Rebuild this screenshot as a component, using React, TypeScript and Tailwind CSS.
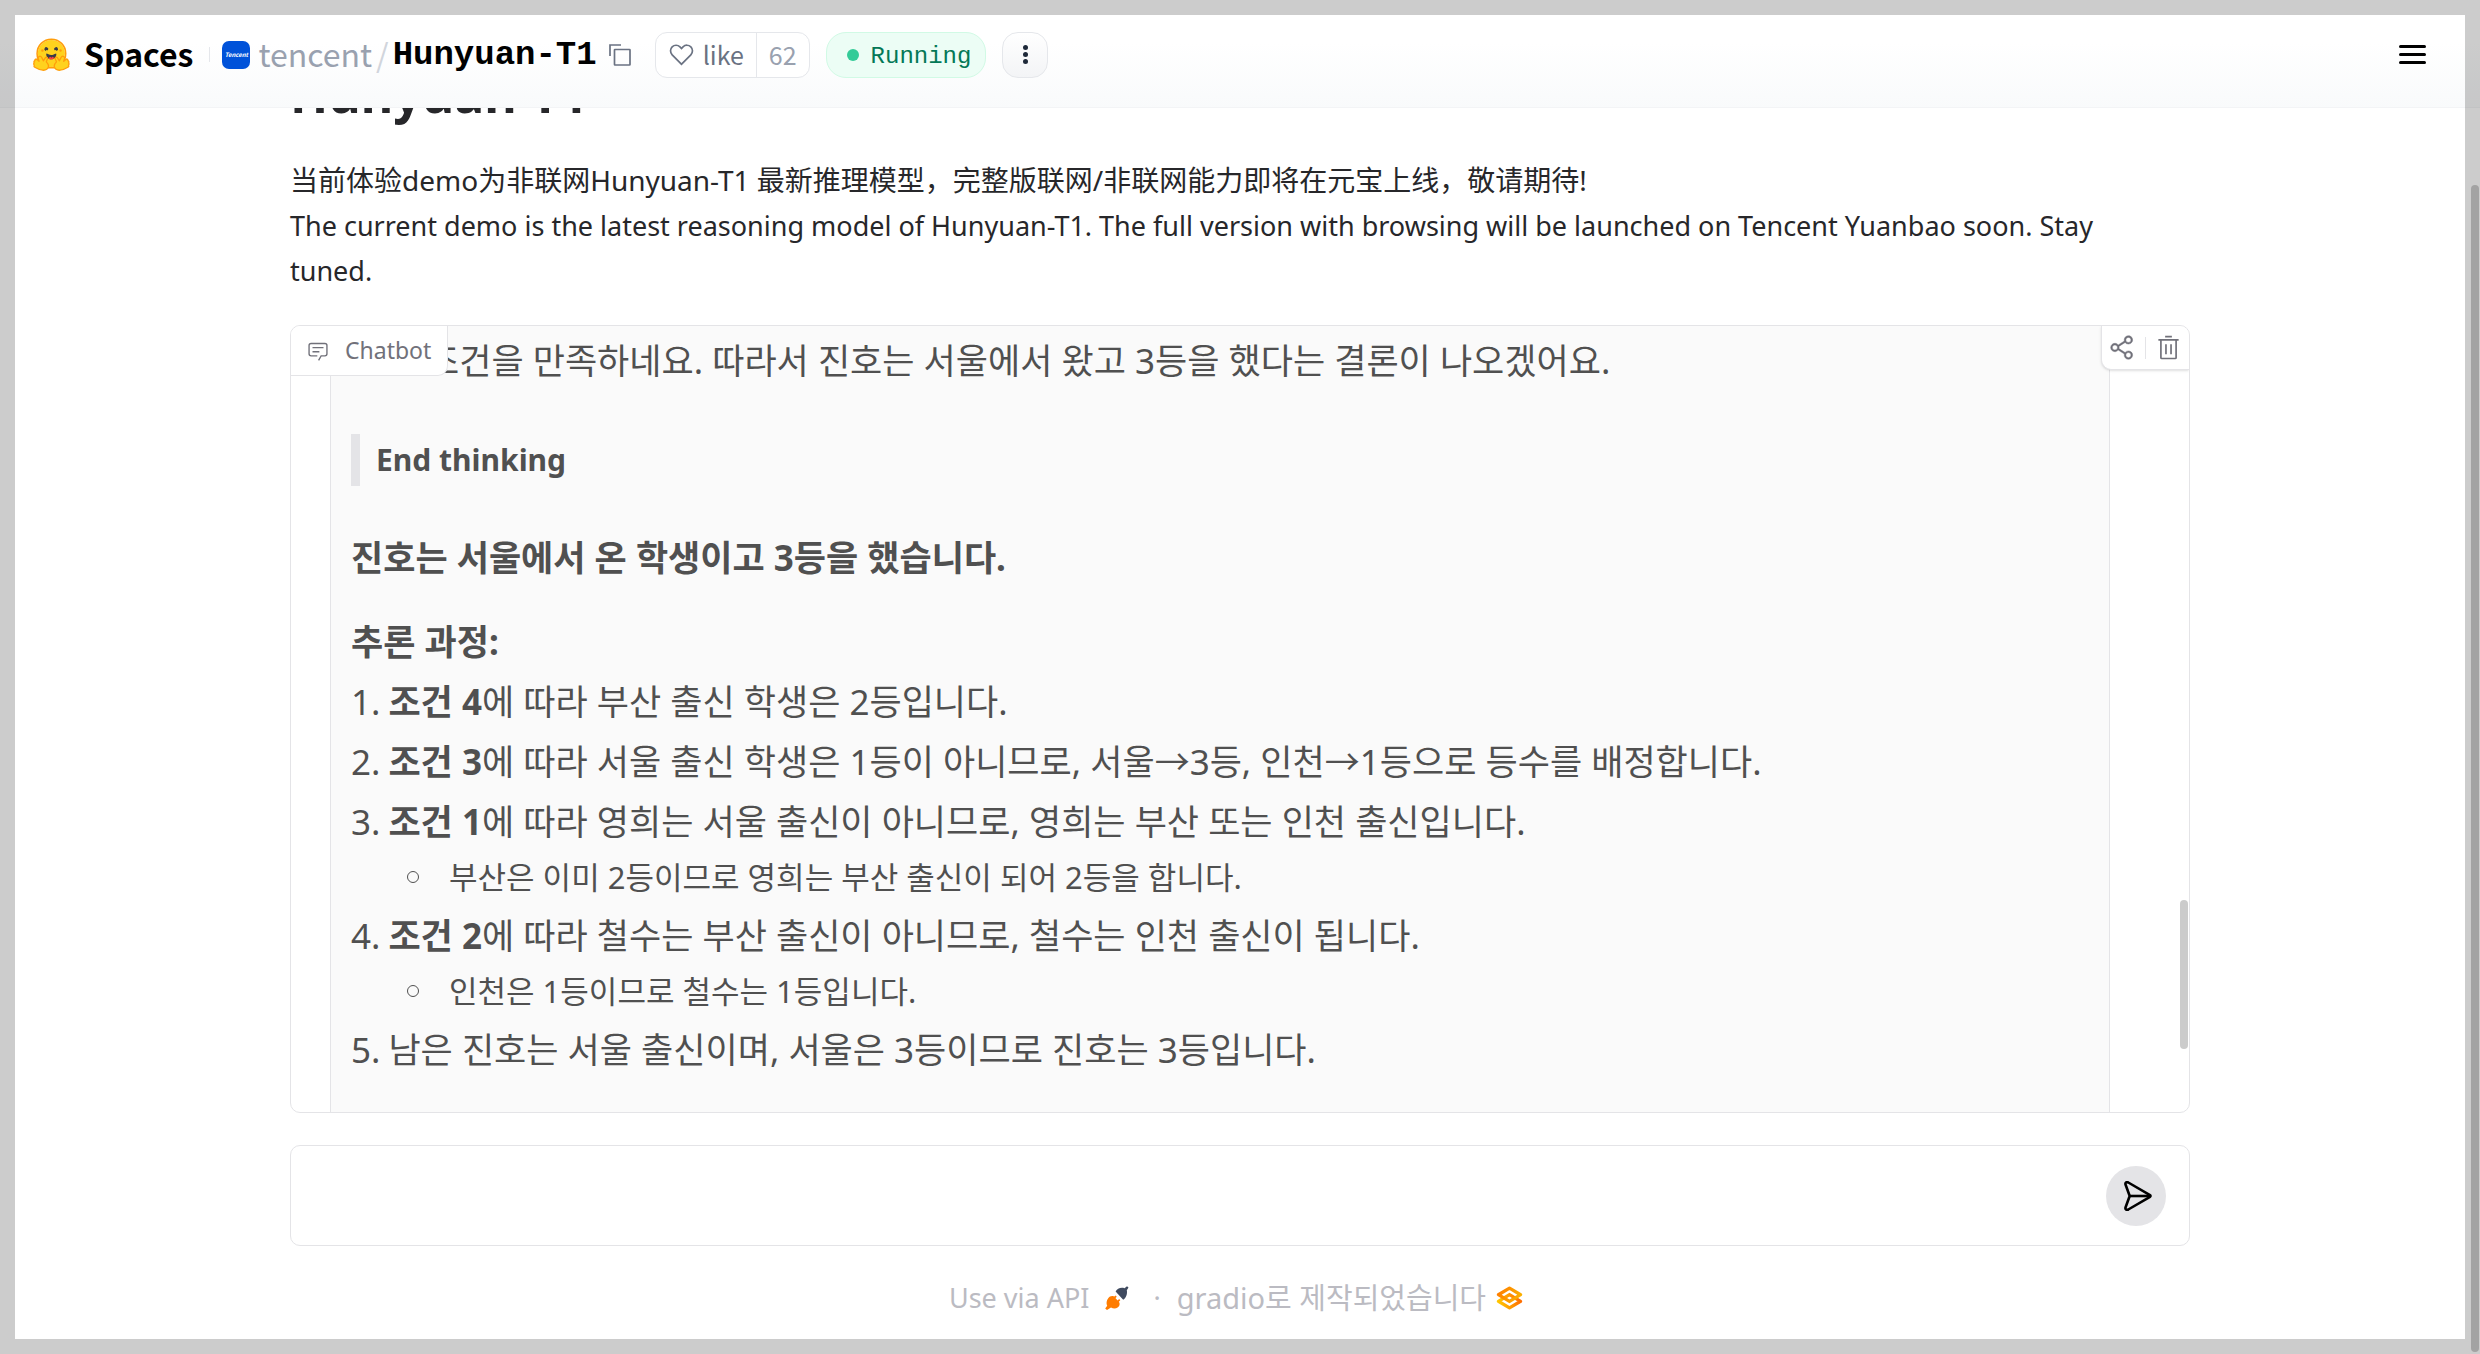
import { useState } from 'react'

const steps = [
  { bold: '조건 4', text: '에 따라 부산 출신 학생은 2등입니다.' },
  { bold: '조건 3', text: '에 따라 서울 출신 학생은 1등이 아니므로, 서울→3등, 인천→1등으로 등수를 배정합니다.' },
  {
    bold: '조건 1',
    text: '에 따라 영희는 서울 출신이 아니므로, 영희는 부산 또는 인천 출신입니다.',
    note: '부산은 이미 2등이므로 영희는 부산 출신이 되어 2등을 합니다.'
  },
  {
    bold: '조건 2',
    text: '에 따라 철수는 부산 출신이 아니므로, 철수는 인천 출신이 됩니다.',
    note: '인천은 1등이므로 철수는 1등입니다.'
  },
  { bold: '', text: '남은 진호는 서울 출신이며, 서울은 3등이므로 진호는 3등입니다.' }
]

function HuggingFaceLogo() {
  return (
    <svg viewBox="0 0 95 88" className="w-[37px] h-[35px]" aria-hidden="true">
      <path fill="#FFD21E" d="M47.2 76.2a34.75 34.75 0 1 0 0-69.5 34.75 34.75 0 0 0 0 69.5Z" />
      <path fill="#FF9D0B" d="M82 41.5a34.75 34.75 0 1 0-69.5 0 34.75 34.75 0 0 0 69.5 0Zm-73.5 0a38.75 38.75 0 1 1 77.5 0 38.75 38.75 0 0 1-77.5 0Z" />
      <path fill="#3A3B45" d="M58.5 32.3c1.28.44 1.78 3.06 3.07 2.38a5 5 0 1 0-6.76-2.07c.61 1.15 2.55-.72 3.7-.32ZM34.95 32.3c-1.28.44-1.79 3.06-3.07 2.38a5 5 0 1 1 6.76-2.07c-.61 1.15-2.56-.72-3.7-.32Z" />
      <path fill="#3A3B45" d="M46.96 56.3c9.83 0 13-8.76 13-13.26 0-2.34-1.57-1.6-4.09-.36-2.33 1.15-5.46 2.74-8.9 2.74-7.19 0-13-6.88-13-2.38s3.16 13.26 13 13.26Z" />
      <path fill="#F94040" d="M39.43 54a8.7 8.7 0 0 1 5.3-4.49c.4-.12.81.57 1.24 1.28.4.68.82 1.37 1.24 1.37.45 0 .9-.68 1.33-1.35.45-.7.89-1.38 1.32-1.25a8.61 8.61 0 0 1 5 4.17c-4 3.6-11.4 4-15.43.27Z" />
      <path fill="#FF9D0B" d="M70.7 37a3.25 3.25 0 1 0 0-6.5 3.25 3.25 0 0 0 0 6.5ZM24.2 37a3.25 3.25 0 1 0 0-6.5 3.25 3.25 0 0 0 0 6.5Z" />
      <g fill="#FFD21E" stroke="#FF9D0B" strokeWidth="3.4" strokeLinejoin="round">
        <path d="M17.5 48.6c-2.6 0-4.6 2.2-4.2 5.2l2.2 7.6-6-5.3c-2.2-1.4-5.2.4-4.6 3.6-2.8 1-3.2 4-1.8 5.8-1.8 1.8-1.6 4.2.2 5.6-1.6 2-.8 4.4 1.4 5.6 6.6 4 13.2 7 20.4 7.6 8.2.6 14.4-3.2 14.9-10.4.3-4.6-2.6-7.8-5.8-11l3.1-8.3c.7-3.2-2.9-5.1-5.3-2.6l-5.4 8.2-4.2-8.6c-1-2-2.8-3.4-4.9-3.4Z" />
        <path d="M76.9 48.6c2.6 0 4.6 2.2 4.2 5.2l-2.2 7.6 6-5.3c2.2-1.4 5.2.4 4.6 3.6 2.8 1 3.2 4 1.8 5.8 1.8 1.8 1.6 4.2-.2 5.6 1.6 2 .8 4.4-1.4 5.6-6.6 4-13.2 7-20.4 7.6-8.2.6-14.4-3.2-14.9-10.4-.3-4.6 2.6-7.8 5.8-11l-3.1-8.3c-.7-3.2 2.9-5.1 5.3-2.6l5.4 8.2 4.2-8.6c1-2 2.8-3.4 4.9-3.4Z" />
      </g>
    </svg>
  )
}

function CopyIcon() {
  return (
    <svg viewBox="0 0 22 22" className="w-[22px] h-[22px]" fill="none" stroke="currentColor" strokeWidth="1.7" aria-hidden="true">
      <path d="M1 12V1h11" />
      <rect x="5.5" y="5.5" width="15.5" height="15.5" rx="0.5" />
    </svg>
  )
}

function HeartIcon() {
  return (
    <svg viewBox="0 0 32 32" className="w-[27px] h-[27px]" fill="currentColor" aria-hidden="true">
      <path d="M22.45 6a5.47 5.47 0 0 1 3.91 1.64 5.7 5.7 0 0 1 0 8L16 26.13 5.64 15.64a5.7 5.7 0 0 1 0-8 5.48 5.48 0 0 1 7.82 0L16 10.24l2.53-2.58A5.44 5.44 0 0 1 22.45 6m0-2a7.47 7.47 0 0 0-5.34 2.24L16 7.36l-1.11-1.12a7.49 7.49 0 0 0-10.68 0 7.72 7.72 0 0 0 0 10.82L16 29l11.79-11.94a7.72 7.72 0 0 0 0-10.82A7.49 7.49 0 0 0 22.45 4Z" />
    </svg>
  )
}

function ChatIcon() {
  return (
    <svg viewBox="0 0 32 32" className="w-[22px] h-[22px]" fill="currentColor" aria-hidden="true">
      <path d="M17.74 30 16 29l4-7h6a2 2 0 0 0 2-2V8a2 2 0 0 0-2-2H6a2 2 0 0 0-2 2v12a2 2 0 0 0 2 2h9v2H6a4 4 0 0 1-4-4V8a4 4 0 0 1 4-4h20a4 4 0 0 1 4 4v12a4 4 0 0 1-4 4h-4.84Z" />
      <path d="M8 10h16v2H8zM8 16h10v2H8z" />
    </svg>
  )
}

function ShareIcon() {
  return (
    <svg viewBox="0 0 32 32" className="w-[27px] h-[27px]" fill="currentColor" stroke="currentColor" strokeWidth="0.5" aria-hidden="true">
      <path d="M23 20a5 5 0 0 0-3.89 1.89l-7.31-4.57a4.46 4.46 0 0 0 0-2.64l7.31-4.57A5 5 0 1 0 18 7a4.79 4.79 0 0 0 .2 1.32l-7.31 4.57a5 5 0 1 0 0 6.22l7.31 4.57A4.79 4.79 0 0 0 18 25a5 5 0 1 0 5-5Zm0-16a3 3 0 1 1-3 3 3 3 0 0 1 3-3ZM7 19a3 3 0 1 1 3-3 3 3 0 0 1-3 3Zm16 9a3 3 0 1 1 3-3 3 3 0 0 1-3 3Z" />
    </svg>
  )
}

function TrashIcon() {
  return (
    <svg viewBox="0 0 32 32" className="w-[27px] h-[27px]" fill="currentColor" aria-hidden="true">
      <path d="M12 12h2v12h-2zM18 12h2v12h-2z" />
      <path d="M4 6v2h2v20a2 2 0 0 0 2 2h16a2 2 0 0 0 2-2V8h2V6Zm4 22V8h16v20ZM12 2h8v2h-8z" />
    </svg>
  )
}

function SendIcon() {
  return (
    <svg viewBox="0 0 28 30" className="w-7 h-[30px]" fill="none" stroke="currentColor" strokeWidth="2.6" strokeLinejoin="round" aria-hidden="true">
      <path d="M1.6 3.8c-.7-1.9.9-3.3 2.7-2.3L26 14.2c.7.4.7 1.2 0 1.6L4.3 28.5c-1.8 1-3.4-.4-2.7-2.3L5.7 15Z" />
      <path d="M5.7 15H26" />
    </svg>
  )
}

function PlugIcon() {
  return (
    <svg viewBox="0 0 24 24" className="w-6 h-6" aria-hidden="true">
      <g fill="#FF7C00">
        <path d="M3.2 12.2c1.5-2 4-2.6 5.8-1.6l5.2 5.6c1 1.8.2 4.2-1.6 5.4-2 1.3-4.7 1.2-6.6-.2L2 24l-1.8-1.4 2-2.8C1 17.6 1.5 14.4 3.2 12.2Z" />
        <path d="m8.2 11.6 2.3-2.2 1.3 1.3-2.3 2.3zM11.8 15.2l2.3-2.2 1.2 1.3-2.2 2.2z" />
      </g>
      <path fill="#3F4A5F" d="M10.6 5.4C12 2.6 16 .9 19.5 2.2L22 .2l1.5 1.3-1.7 2.7c.8 3.3-.5 7.6-3.6 9.5Z" />
    </svg>
  )
}

function GradioLogo() {
  return (
    <svg viewBox="0 0 28 24" className="w-[27px] h-6" fill="none" strokeWidth="3.4" strokeLinejoin="round" aria-hidden="true">
      <defs>
        <linearGradient id="gradio-top" x1="2" y1="4" x2="26" y2="16" gradientUnits="userSpaceOnUse">
          <stop stopColor="#FF7C00" />
          <stop offset="1" stopColor="#F9B600" />
        </linearGradient>
        <linearGradient id="gradio-bottom" x1="26" y1="12" x2="2" y2="18" gradientUnits="userSpaceOnUse">
          <stop stopColor="#FF6A00" />
          <stop offset="1" stopColor="#FFC800" />
        </linearGradient>
      </defs>
      <path stroke="url(#gradio-bottom)" d="M14 8.4 25.5 15.4 14 22.2 2.5 15.4Z" />
      <path stroke="url(#gradio-top)" d="M14 1.8 25.5 8.6 14 15.6 2.5 8.6Z" />
    </svg>
  )
}

function Header() {
  return (
    <header className="relative z-10 h-[108px] border-b border-gray-100 bg-white font-['Noto_Sans_CJK_KR',sans-serif]">
      <div className="h-full pt-[2px] pl-[33px] pr-[54px] flex items-center leading-none bg-gradient-to-b from-white from-40% to-gray-50">
        <a href="/spaces" className="flex items-center gap-[14px] text-[32px] font-bold text-black">
          <HuggingFaceLogo />
          <span className="pb-1">Spaces</span>
        </a>
        <span className="w-px h-[15px] ml-4 mr-3 bg-gray-200" />
        <span className="w-7 h-7 rounded-[7px] overflow-hidden bg-[#0052d9] text-white text-[6px] font-bold italic flex items-center justify-center">
          Tencent
        </span>
        <a href="/tencent" className="ml-2 pb-1 text-[32px] text-gray-400">tencent</a>
        <span className="mx-1 pb-1 text-[32px] text-gray-300">/</span>
        <a href="/spaces/tencent/Hunyuan-T1" className="text-[34px] font-bold text-black font-['Liberation_Mono',monospace]">
          Hunyuan-T1
        </a>
        <button aria-label="Copy" className="ml-3 text-gray-500"><CopyIcon /></button>
        <div className="ml-6 h-[46px] flex items-stretch rounded-xl border border-gray-200 bg-white text-[25px]">
          <button className="px-3 flex items-center gap-2 text-gray-500">
            <HeartIcon />
            like
          </button>
          <button className="px-3 border-l border-gray-200 text-gray-400">62</button>
        </div>
        <div className="ml-4 h-[46px] pl-5 pr-[14px] flex items-center gap-3 rounded-[20px] border border-[#d1fae5] bg-[#ecfdf5] text-2xl leading-none text-[#047857] font-['Liberation_Mono',monospace]">
          <span className="w-3 h-3 rounded-full bg-[#34cb98]" />
          <span className="pt-1">Running</span>
        </div>
        <button aria-label="More" className="ml-4 w-[46px] h-[46px] flex flex-col items-center justify-center gap-[2px] rounded-2xl border border-gray-200 bg-gradient-to-b from-white to-gray-100">
          <span className="w-[5px] h-[5px] rounded-full bg-gray-800" />
          <span className="w-[5px] h-[5px] rounded-full bg-gray-800" />
          <span className="w-[5px] h-[5px] rounded-full bg-gray-800" />
        </button>
        <button aria-label="Menu" className="ml-auto w-[27px] flex flex-col gap-[5px]">
          <span className="h-[3px] rounded-full bg-black" />
          <span className="h-[3px] rounded-full bg-black" />
          <span className="h-[3px] rounded-full bg-black" />
        </button>
      </div>
    </header>
  )
}

function Chatbot() {
  return (
    <section aria-label="Chatbot" className="relative mt-8 pl-[39px] pr-[79px] rounded-[10px] border border-[#e4e4e7] overflow-hidden">
      <div className="px-5 pb-8 border-x border-[#e4e4e7] bg-[#fafafa] text-[35px] text-[#505050]">
        <p className="pl-[76px] leading-[70px] whitespace-nowrap">조건을 만족하네요. 따라서 진호는 서울에서 왔고 3등을 했다는 결론이 나오겠어요.</p>
        <blockquote className="mt-[38px] pl-4 border-l-[9px] border-[#e4e4e7] text-[30px] leading-[52px] font-bold">End thinking</blockquote>
        <p className="mt-[42px] leading-[60px] font-bold">진호는 서울에서 온 학생이고 3등을 했습니다.</p>
        <p className="mt-6 leading-[60px] font-bold">추론 과정:</p>
        <ol className="leading-[60px]">
          {steps.map((step, index) => (
            <li key={step.text}>
              <div className="flex gap-2">
                <span>{index + 1}.</span>
                <p><strong>{step.bold}</strong>{step.text}</p>
              </div>
              {step.note && (
                <ul className="pl-14 pb-1">
                  <li className="flex items-center gap-[30px] text-[31px] leading-[50px]">
                    <span className="w-3 h-3 rounded-full border border-[#505050]" />
                    {step.note}
                  </li>
                </ul>
              )}
            </li>
          ))}
        </ol>
      </div>

      <div className="absolute left-0 top-0 h-[50px] px-4 flex items-center gap-4 border-r border-b border-[#e4e4e7] rounded-br-[10px] bg-white text-[23px] text-[#71717a]">
        <ChatIcon />
        Chatbot
      </div>
      <div className="absolute right-0 top-0 h-[44px] px-[7px] flex items-center gap-[9px] border-l border-b border-[#e4e4e7] rounded-bl-[10px] bg-white shadow-sm text-[#71717a]">
        <button aria-label="Share"><ShareIcon /></button>
        <span className="w-px h-[22px] bg-[#e4e4e7]" />
        <button aria-label="Clear"><TrashIcon /></button>
      </div>
      <div className="absolute right-px bottom-[63px] w-2 h-[149px] rounded-full bg-[#cbcbcb]" />
    </section>
  )
}

export default function App() {
  const [message, setMessage] = useState('')

  return (
    <div className="relative min-h-screen overflow-hidden bg-white font-['Noto_Sans','Noto_Sans_CJK_KR',sans-serif]">
      <Header />
      <main className="mx-[290px]">
        <h1 className="-mt-11 text-[50px] leading-[60px] font-bold text-[#27272a]">Hunyuan-T1</h1>
        <div className="mt-[34px] pr-10 leading-[45px] text-[#27272a]">
          <p lang="zh" className="text-[28px] font-['Noto_Sans','Noto_Sans_CJK_SC',sans-serif]">
            当前体验demo为非联网Hunyuan-T1 最新推理模型，完整版联网/非联网能力即将在元宝上线，敬请期待!
          </p>
          <p className="text-[27px]">The current demo is the latest reasoning model of Hunyuan-T1. The full version with browsing will be launched on Tencent Yuanbao soon. Stay tuned.</p>
        </div>

        <Chatbot />

        <form className="mt-8 h-[101px] pl-6 pr-[23px] flex items-center rounded-[10px] border border-[#e4e4e7]" onSubmit={(e) => e.preventDefault()}>
          <input
            aria-label="Message"
            value={message}
            onChange={(e) => setMessage(e.target.value)}
            className="flex-1 text-[28px] outline-none"
          />
          <button aria-label="Send" className="w-[60px] h-[60px] pl-1 flex items-center justify-center rounded-full bg-[#e4e4e7] text-black">
            <SendIcon />
          </button>
        </form>
      </main>

      <footer className="mt-8 pb-8 pr-2 flex items-center justify-center leading-[40px] text-[#bbbbc2]">
        <a href="/api" className="flex items-center gap-4 text-[27px]">
          Use via API
          <PlugIcon />
        </a>
        <span className="ml-6 mr-4 text-[27px]">·</span>
        <a href="https://gradio.app" className="flex items-center gap-[10px] text-[29px]">
          gradio로 제작되었습니다
          <GradioLogo />
        </a>
      </footer>

      <div className="absolute inset-0 z-20 border-[15px] border-black/20 pointer-events-none" />
      <div className="absolute right-px top-[185px] bottom-[2px] z-20 w-2 rounded-full bg-[#a3a3a3]" />
    </div>
  )
}
